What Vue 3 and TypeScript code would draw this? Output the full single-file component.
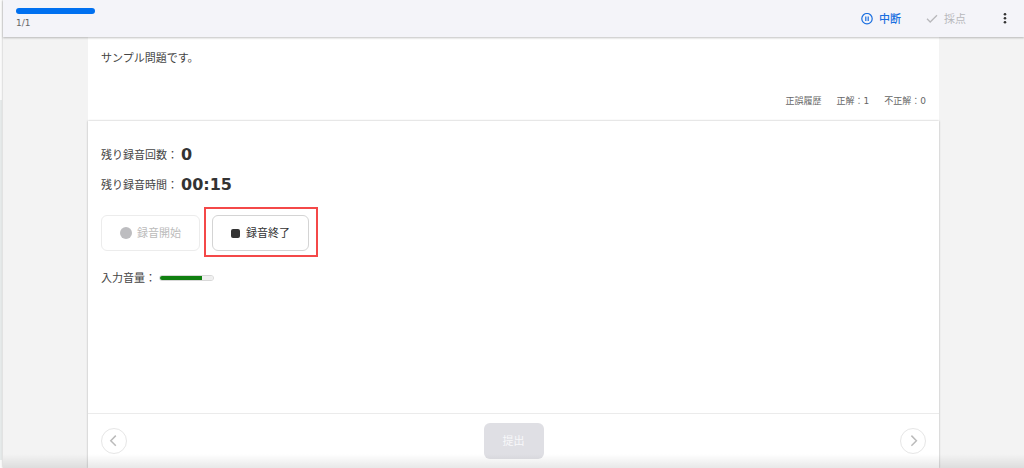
<script setup lang="ts">
import { ref } from 'vue'

const current = ref(1)
const total = ref(1)
const correct = ref(1)
const incorrect = ref(0)
const remainingCount = ref(0)
const remainingTime = ref('00:15')
const volume = ref(80)
const recording = ref(true)
</script>

<template>
  <div class="page">
    <div class="rail"><div class="rail-panel"></div></div>
    <div class="app">
      <header class="header">
        <div class="status">
          <progress class="progress" :value="current" :max="total" aria-label="進捗"></progress>
          <span class="count">{{ current }}/{{ total }}</span>
        </div>
        <div class="actions">
          <button type="button" class="action pause">
            <svg width="12" height="12" viewBox="0 0 12 12" fill="none" stroke="currentColor" aria-hidden="true">
              <circle cx="6" cy="5.7" r="5.2" stroke-width="1.2" />
              <path d="M4.8 3.5v4.4M7.2 3.5v4.4" stroke-width="1.2" />
            </svg>
            中断
          </button>
          <button type="button" class="action score" disabled>
            <svg width="12" height="12" viewBox="0 0 12 12" fill="none" stroke="currentColor" aria-hidden="true">
              <path d="M1 5.8l3.2 3.2L11 2.2" stroke-width="1.3" />
            </svg>
            採点
          </button>
          <button type="button" class="action more" aria-label="メニュー">
            <svg width="4" height="12" viewBox="0 0 4 12" fill="currentColor" aria-hidden="true">
              <circle cx="2" cy="1.3" r="1.3" />
              <circle cx="2" cy="5.3" r="1.3" />
              <circle cx="2" cy="9.3" r="1.3" />
            </svg>
          </button>
        </div>
      </header>

      <main class="stage">
        <section class="question">
          <p class="prompt">サンプル問題です。</p>
          <div class="history">
            <span>正誤履歴</span>
            <span>正解：{{ correct }}</span>
            <span>不正解：{{ incorrect }}</span>
          </div>
        </section>

        <section class="card">
          <div class="answer">
            <p class="row">残り録音回数：<strong>{{ remainingCount }}</strong></p>
            <p class="row">残り録音時間：<strong>{{ remainingTime }}</strong></p>
            <div class="recorder">
              <button type="button" class="record start" :disabled="recording">
                <span class="dot"></span>録音開始
              </button>
              <div class="highlight">
                <button type="button" class="record stop" :disabled="!recording">
                  <span class="square"></span>録音終了
                </button>
              </div>
            </div>
            <label class="volume">入力音量：<progress class="level" :value="volume" max="100"></progress></label>
          </div>
          <footer class="footer">
            <button type="button" class="nav" aria-label="前へ" disabled>
              <svg width="12" height="12" viewBox="0 0 12 12" fill="none" stroke="currentColor" stroke-width="1.5" aria-hidden="true">
                <path d="M7.8 0.6L2.8 5.7l5 5.1" />
              </svg>
            </button>
            <button type="button" class="submit" disabled>提出</button>
            <button type="button" class="nav" aria-label="次へ" disabled>
              <svg width="12" height="12" viewBox="0 0 12 12" fill="none" stroke="currentColor" stroke-width="1.5" aria-hidden="true">
                <path d="M4.4 0.6l5 5.1-5 5.1" />
              </svg>
            </button>
          </footer>
        </section>
      </main>
    </div>
  </div>
</template>

<style>
body {
  margin: 0;
}
</style>

<style scoped>
.page {
  position: relative;
  display: flex;
  min-height: 100vh;
  background: #f3f3f3;
  color: #444;
  font-family: "Noto Sans", "Noto Sans CJK JP", sans-serif;
  font-size: 11px;
  line-height: 16px;
}
.page::after {
  content: "";
  position: absolute;
  inset: auto 0 0 3px;
  height: 14px;
  background: linear-gradient(rgba(0, 0, 0, 0), rgba(0, 0, 0, 0.09));
  pointer-events: none;
}
button {
  box-sizing: border-box;
  margin: 0;
  padding: 0;
  border: 0;
  background: none;
  font: inherit;
  color: inherit;
  display: flex;
  align-items: center;
  justify-content: center;
}
p {
  margin: 0;
}
.rail {
  flex: none;
  box-sizing: border-box;
  width: 3px;
  padding: 100px 0 8px;
  display: flex;
  background: #fafafa;
}
.rail-panel {
  width: 2px;
  background: #e6eaea;
}
.app {
  flex: 1;
  min-width: 0;
  display: flex;
  flex-direction: column;
  box-shadow: 0 0 2px rgba(0, 0, 0, 0.3);
}
.header {
  position: relative;
  box-sizing: border-box;
  height: 37px;
  padding: 0 17px 0 13px;
  display: flex;
  justify-content: space-between;
  background: #f4f4f9;
  box-shadow: 0 1px 2px rgba(0, 0, 0, 0.25);
}
.status {
  display: flex;
  flex-direction: column;
  padding-top: 8px;
}
progress {
  appearance: none;
  display: block;
  border: 0;
  overflow: hidden;
}
.progress {
  width: 79px;
  height: 6px;
  border-radius: 3px;
  background: #dde3ee;
}
.progress::-webkit-progress-bar {
  background: #dde3ee;
}
.progress::-webkit-progress-value {
  background: #0070f0;
}
.count {
  padding-top: 1px;
  font-family: "DejaVu Sans", sans-serif;
  font-size: 9px;
  color: #666;
}
.actions {
  display: flex;
  align-items: center;
  gap: 25px;
}
.action {
  gap: 6px;
}
.pause {
  color: #1a6fe0;
  font-weight: 500;
}
.score {
  color: #b8b8bc;
}
.more {
  margin-left: 12px;
  color: #333;
}
.stage {
  flex: 1;
  display: flex;
  flex-direction: column;
  padding: 0 85px;
}
.question {
  box-sizing: border-box;
  min-height: 84px;
  padding: 13px;
  display: flex;
  flex-direction: column;
  justify-content: space-between;
  background: #fff;
}
.history {
  display: flex;
  justify-content: flex-end;
  gap: 15px;
  font-family: "DejaVu Sans", "Noto Sans CJK JP", sans-serif;
  font-size: 9px;
  line-height: 14px;
  color: #666;
}
.card {
  flex: 1;
  display: flex;
  flex-direction: column;
  background: #fff;
  box-shadow: 0 0 2px rgba(0, 0, 0, 0.3);
}
.answer {
  flex: 1;
  padding: 19px 13px;
}
.row {
  display: flex;
  align-items: center;
  gap: 3px;
  height: 30px;
}
.row strong {
  font-family: "DejaVu Sans", sans-serif;
  font-size: 16px;
  color: #333;
}
.recorder {
  display: flex;
  align-items: flex-end;
  gap: 4px;
  margin-top: 7px;
}
.highlight {
  padding: 6px 7px 4px 6px;
  border: 2px solid #f44848;
}
.record {
  height: 36px;
  padding: 0 18px;
  gap: 6px;
  border: 1px solid #ececec;
  border-radius: 6px;
  color: #bbb;
}
.start {
  gap: 5px;
  margin-bottom: 6px;
}
.stop {
  border-color: #d4d4d4;
  color: #333;
}
.dot {
  width: 12px;
  height: 12px;
  border-radius: 50%;
  background: #bdbdc0;
}
.square {
  width: 9px;
  height: 9px;
  border-radius: 2px;
  background: #333;
}
.volume {
  display: flex;
  align-items: center;
  gap: 3px;
  margin-top: 13px;
}
.level {
  box-sizing: border-box;
  width: 55px;
  height: 6px;
  border: 1px solid #d8d8d8;
  border-radius: 3px;
  background: #efefef;
}
.level::-webkit-progress-bar {
  background: #efefef;
}
.level::-webkit-progress-value {
  background: #108010;
}
.footer {
  padding: 9px 13px;
  display: flex;
  align-items: center;
  justify-content: space-between;
  border-top: 1px solid #ebebeb;
}
.nav {
  width: 26px;
  height: 26px;
  border: 1px solid #e6e6e6;
  border-radius: 50%;
  color: #bbb;
}
.submit {
  width: 60px;
  height: 36px;
  border-radius: 6px;
  background: #dfdfe4;
  color: #f8f8fa;
}
</style>
